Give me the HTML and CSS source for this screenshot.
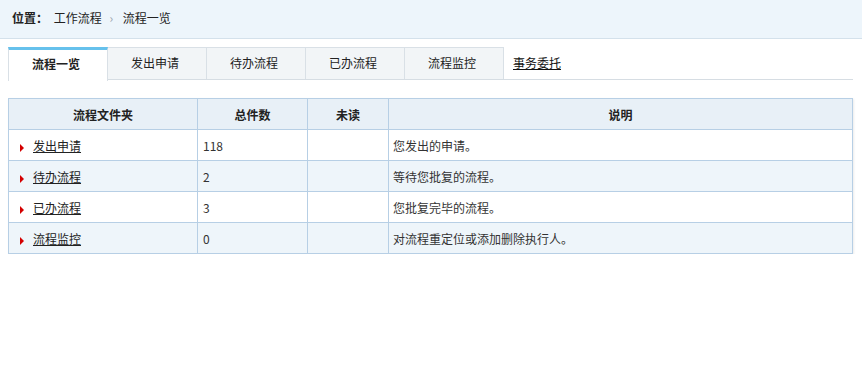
FILE: index.html
```html
<!DOCTYPE html>
<html lang="zh-CN">
<head>
    <meta charset="UTF-8">
    <title>流程一览</title>
    <link rel="stylesheet" href="styles.css">
</head>
<body>

    <!-- 位置导航 -->
    <div class="location">
        <b>位置：</b>
        <span class="crumb">工作流程</span>
        <span class="sep">›</span>
        <span class="crumb">流程一览</span>
    </div>

    <div class="main">
        <!-- 选项卡 -->
        <ul class="tabs">
            <li class="tab active">流程一览</li>
            <li class="tab">发出申请</li>
            <li class="tab">待办流程</li>
            <li class="tab">已办流程</li>
            <li class="tab">流程监控</li>
            <li class="tab-link"><a href="#">事务委托</a></li>
        </ul>

        <!-- 流程列表 -->
        <table class="list">
            <colgroup>
                <col class="c-name">
                <col class="c-total">
                <col class="c-unread">
                <col>
            </colgroup>
            <thead>
                <tr>
                    <th>流程文件夹</th>
                    <th>总件数</th>
                    <th>未读</th>
                    <th>说明</th>
                </tr>
            </thead>
            <tbody>
                <tr>
                    <td class="name"><i class="arrow"></i><a href="#">发出申请</a></td>
                    <td>118</td>
                    <td></td>
                    <td class="desc">您发出的申请。</td>
                </tr>
                <tr class="alt">
                    <td class="name"><i class="arrow"></i><a href="#">待办流程</a></td>
                    <td>2</td>
                    <td></td>
                    <td class="desc">等待您批复的流程。</td>
                </tr>
                <tr>
                    <td class="name"><i class="arrow"></i><a href="#">已办流程</a></td>
                    <td>3</td>
                    <td></td>
                    <td class="desc">您批复完毕的流程。</td>
                </tr>
                <tr class="alt">
                    <td class="name"><i class="arrow"></i><a href="#">流程监控</a></td>
                    <td>0</td>
                    <td></td>
                    <td class="desc">对流程重定位或添加删除执行人。</td>
                </tr>
            </tbody>
        </table>
    </div>

</body>
</html>
```

FILE: styles.css
```css
body {
    margin: 0;
    font-family: "Noto Sans CJK SC", "Noto Sans", sans-serif;
    font-size: 12px;
    color: #333;
    background: #fff;
}

.location {
    height: 38px;
    line-height: 36px;
    padding-left: 12px;
    background-color: #edf5fb;
    border-bottom: 1px solid #d4e1eb;
    color: #222;
}

.location b {
    margin-right: 3px;
}

.location .sep {
    color: #9aa4ad;
    margin: 0 7px 0 5px;
}

.main {
    padding: 8px 9px 0 8px;
}

.tabs {
    display: flex;
    list-style: none;
    margin: 0;
    padding: 0;
    height: 32px;
    border-bottom: 1px solid #d6dde3;
}

.tab {
    width: 98px;
    height: 31px;
    line-height: 30px;
    text-align: center;
    background-color: #f2f5f7;
    border: 1px solid #d9e0e6;
    border-left: none;
    border-bottom: none;
    color: #222;
    text-indent: -4px;
}

.tab:first-child {
    border-left: 1px solid #d9e0e6;
}

.tab.active {
    background-color: #fff;
    border-top: 3px solid #66c1ec;
    line-height: 28px;
    font-weight: bold;
    margin-bottom: -1px;
    height: 30px;
    padding-bottom: 1px;
}

.tab-link {
    line-height: 32px;
    margin-left: 9px;
}

.tab-link a {
    color: #111;
}

.list {
    width: 100%;
    margin-top: 18px;
    border-collapse: collapse;
    border: 1px solid #a9c2d4;
    box-shadow: 1px 1px 2px rgba(0, 0, 0, 0.08);
}

.c-name { width: 189px; }
.c-total { width: 110px; }
.c-unread { width: 81px; }

.list th,
.list td {
    height: 30px;
    padding: 0 5px;
    border: 1px solid #b7cfe5;
    text-align: left;
}

.list th {
    background-color: #e8f0f7;
    text-align: center;
    color: #222;
}

.list tr.alt td {
    background-color: #eef5fa;
}

.list td.name {
    padding-left: 11px;
}

.list td.name a {
    color: #222;
}

.list td.desc {
    padding-left: 4px;
}

.arrow {
    display: inline-block;
    width: 0;
    height: 0;
    border-top: 4px solid transparent;
    border-bottom: 4px solid transparent;
    border-left: 4px solid #d40000;
    margin-right: 9px;
    vertical-align: -1px;
}
```
